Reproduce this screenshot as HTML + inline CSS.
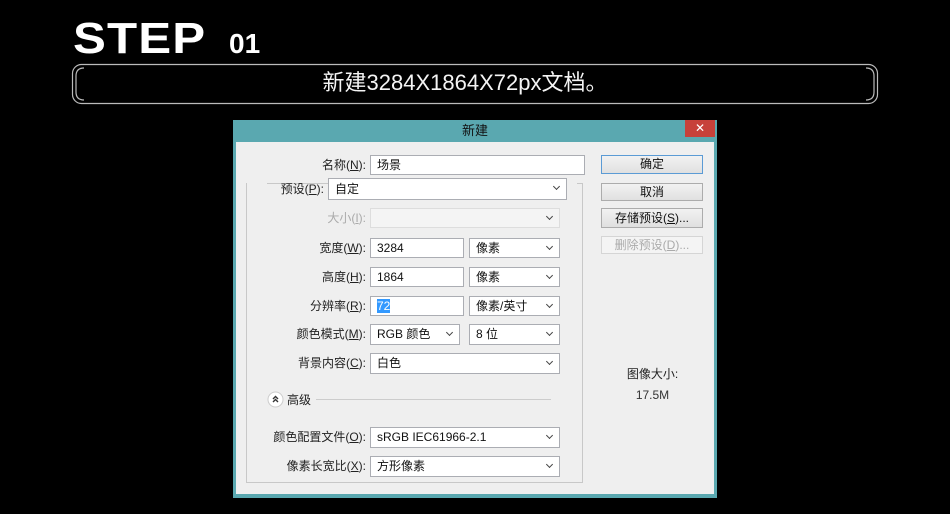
<!DOCTYPE html>
<html><head><meta charset="utf-8"><style>
*{margin:0;padding:0;box-sizing:border-box}
body{width:950px;height:514px;background:#000;position:relative;overflow:hidden;font-family:"Liberation Sans","Noto Sans CJK SC",sans-serif}
.a{position:absolute}
.step{left:73px;top:17px;color:#fff;font:bold 44px/44px "Liberation Sans",sans-serif;letter-spacing:1px;transform:scaleX(1.12);transform-origin:left top;white-space:nowrap}
.num{left:229px;top:30px;color:#fff;font:bold 28px/28px "Liberation Sans",sans-serif;white-space:nowrap}
.cap{left:62px;top:64px;width:806px;height:40px;color:#f4f4f4;font-size:22px;line-height:38px;text-align:center}
.dlg{left:233px;top:120px;width:484px;height:378px;background:#5aa8b0}
.body{left:236px;top:142px;width:478px;height:352px;background:#efefef}
.title{left:233px;top:120px;width:484px;height:22px;text-align:center;font-size:13px;line-height:22px;color:#111}
.x{left:685px;top:120px;width:30px;height:17px;background:#c7413a;color:#fff;font-size:12px;text-align:center;line-height:16px}
.lbl{font-size:12px;color:#222;text-align:right;width:140px;line-height:20px}
.inp{background:#fff;border:1px solid #abadb3;font-size:12px;line-height:18px;padding-left:6px;color:#111}
.sel{background:#fff;border:1px solid #abadb3;font-size:12px;line-height:18px;padding-left:6px;color:#111}
.sel:after{content:"";position:absolute;right:7px;top:5px;width:4px;height:4px;border-right:1.5px solid #444;border-bottom:1.5px solid #444;transform:rotate(45deg)}
.btn{background:linear-gradient(#f2f2f2,#e0e0e0);border:1px solid #acacac;font-size:12px;text-align:center;line-height:17px;color:#111}
</style></head><body>
<div class="a step">STEP</div>
<div class="a num">01</div>
<svg class="a" style="left:0;top:0" width="950" height="120">
<rect x="72.5" y="64.5" width="805" height="39" rx="9" fill="none" stroke="#bbb" stroke-width="1.2"/>
<path d="M84 68 Q76 68 76 76 L76 92 Q76 100 84 100" fill="none" stroke="#bbb" stroke-width="1.2"/>
<path d="M866 68 Q874 68 874 76 L874 92 Q874 100 866 100" fill="none" stroke="#bbb" stroke-width="1.2"/>
</svg>
<div class="a cap">新建3284X1864X72px文档。</div>
<div class="a dlg"></div>
<div class="a body"></div>
<div class="a title">新建</div>
<div class="a x">✕</div>
<div class="a" style="left:246px;top:183px;width:337px;height:300px;border:1px solid #c8c8c8"></div>
<div class="a" style="left:247px;top:176px;width:20px;height:14px;background:#efefef"></div>
<div class="a" style="left:567px;top:176px;width:10px;height:14px;background:#efefef"></div>

<div class="a lbl" style="left:226px;top:155px">名称(<u>N</u>):</div>
<div class="a inp" style="left:370px;top:155px;width:215px;height:20px">场景</div>
<div class="a lbl" style="left:184px;top:179px">预设(<u>P</u>):</div>
<div class="a sel" style="left:328px;top:178px;width:239px;height:22px;line-height:20px">自定</div>
<div class="a lbl" style="left:226px;top:208px;color:#aaa">大小(<u>I</u>):</div>
<div class="a sel" style="left:370px;top:208px;width:190px;height:20px;background:#f4f4f4;border-color:#ddd"></div>
<div class="a lbl" style="left:226px;top:238px">宽度(<u>W</u>):</div>
<div class="a inp" style="left:370px;top:238px;width:94px;height:20px">3284</div>
<div class="a sel" style="left:469px;top:238px;width:91px;height:20px">像素</div>
<div class="a lbl" style="left:226px;top:267px">高度(<u>H</u>):</div>
<div class="a inp" style="left:370px;top:267px;width:94px;height:20px">1864</div>
<div class="a sel" style="left:469px;top:267px;width:91px;height:20px">像素</div>
<div class="a lbl" style="left:226px;top:296px">分辨率(<u>R</u>):</div>
<div class="a inp" style="left:370px;top:296px;width:94px;height:20px"><span style="background:#3399ff;color:#fff">72</span></div>
<div class="a sel" style="left:469px;top:296px;width:91px;height:20px">像素/英寸</div>
<div class="a lbl" style="left:226px;top:324px">颜色模式(<u>M</u>):</div>
<div class="a sel" style="left:370px;top:324px;width:90px;height:21px">RGB 颜色</div>
<div class="a sel" style="left:469px;top:324px;width:91px;height:21px">8 位</div>
<div class="a lbl" style="left:226px;top:353px">背景内容(<u>C</u>):</div>
<div class="a sel" style="left:370px;top:353px;width:190px;height:21px">白色</div>
<svg class="a" style="left:267px;top:391px" width="17" height="17"><circle cx="8.5" cy="8.5" r="7.5" fill="#fff" stroke="#ccc"/><path d="M6 8 L8.5 5.5 L11 8 M6 11 L8.5 8.5 L11 11" fill="none" stroke="#333" stroke-width="1.4"/></svg>
<div class="a" style="left:287px;top:391px;font-size:12px;line-height:18px;color:#222">高级</div>
<div class="a" style="left:316px;top:399px;width:235px;height:1px;background:#ccc"></div>
<div class="a lbl" style="left:226px;top:427px">颜色配置文件(<u>O</u>):</div>
<div class="a sel" style="left:370px;top:427px;width:190px;height:21px">sRGB IEC61966-2.1</div>
<div class="a lbl" style="left:226px;top:456px">像素长宽比(<u>X</u>):</div>
<div class="a sel" style="left:370px;top:456px;width:190px;height:21px">方形像素</div>

<div class="a btn" style="left:601px;top:155px;width:102px;height:19px;border-color:#5b9bd5">确定</div>
<div class="a btn" style="left:601px;top:183px;width:102px;height:18px">取消</div>
<div class="a btn" style="left:601px;top:208px;width:102px;height:20px;line-height:19px">存储预设(<u>S</u>)...</div>
<div class="a btn" style="left:601px;top:236px;width:102px;height:18px;color:#aaa;border-color:#d5d5d5;background:#f4f4f4">删除预设(<u>D</u>)...</div>
<div class="a" style="left:610px;top:365px;width:85px;text-align:center;font-size:12px;color:#222">图像大小:</div>
<div class="a" style="left:610px;top:388px;width:85px;text-align:center;font-size:12px;color:#333">17.5M</div>
</body></html>
